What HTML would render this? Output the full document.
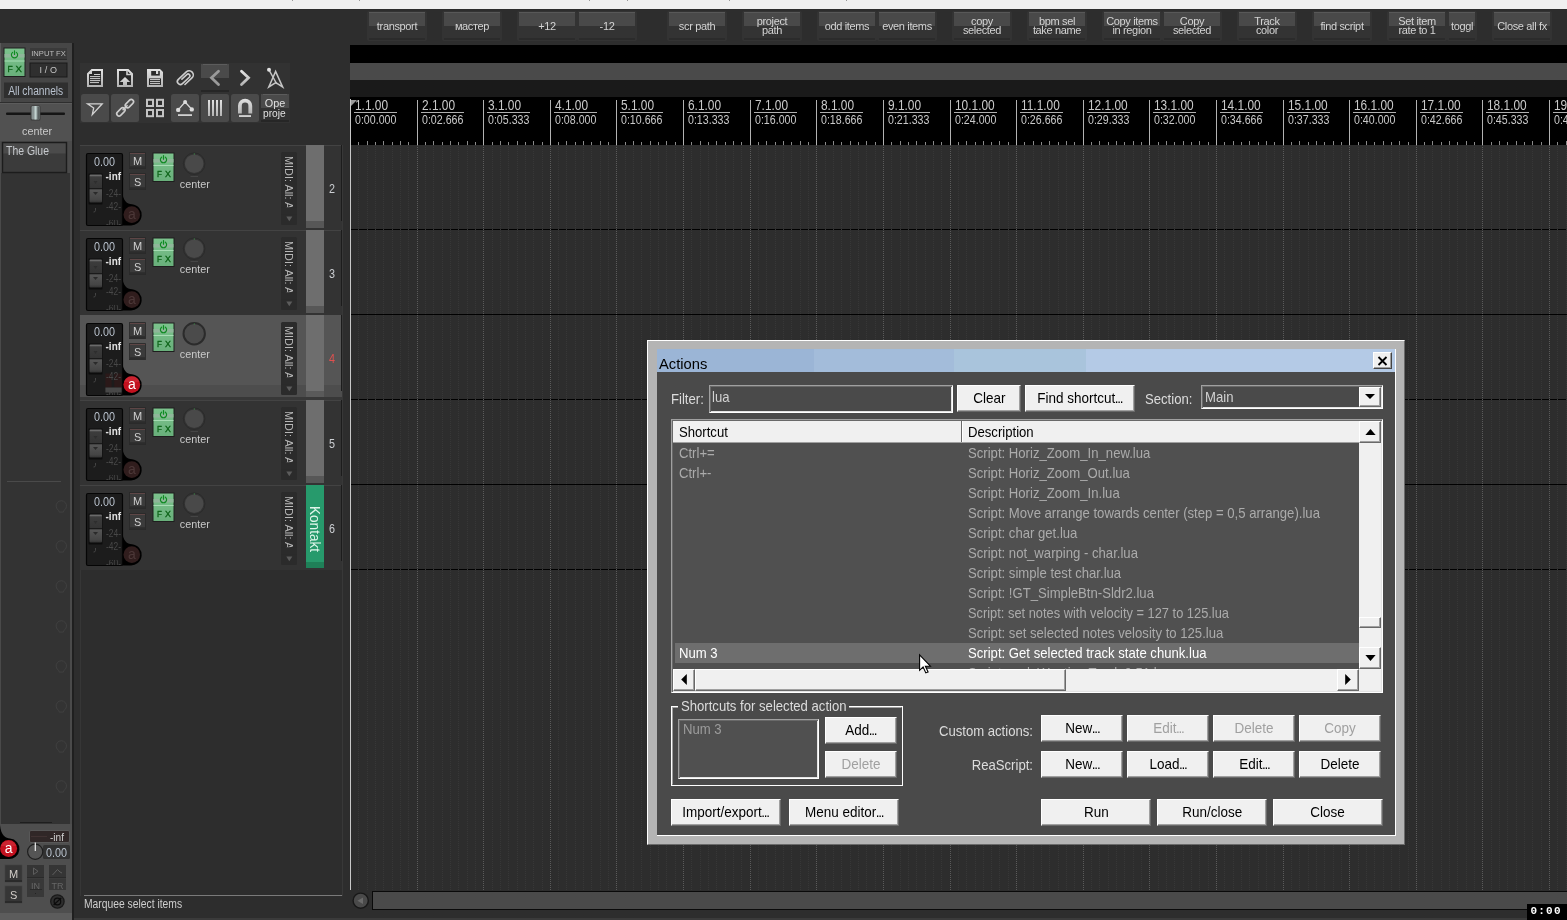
<!DOCTYPE html>
<html><head><meta charset="utf-8">
<style>
html,body{margin:0;padding:0;}
body{width:1567px;height:920px;overflow:hidden;background:#2d2d2d;position:relative;font-family:"Liberation Sans",sans-serif;font-size:12px;color:#cfcfcf;}
.a{position:absolute;}
svg{position:absolute;overflow:visible;}
#top{left:0;top:0;width:1567px;height:9px;background:#f0f0f0;}
/* top toolbar buttons */
.tb{position:absolute;top:11px;width:60px;height:30px;background:#333;border-radius:2px;box-sizing:border-box;}
.tb:before{content:"";position:absolute;left:2px;top:1px;right:2px;height:14px;background:#494949;border-top:1px solid #585858;box-sizing:border-box;}
.tb:after{content:"";position:absolute;left:2px;right:2px;bottom:1px;height:2px;background:#2b2b2b;}
.tb span{position:absolute;left:-4px;right:-4px;top:0;height:30px;display:flex;align-items:center;justify-content:center;text-align:center;color:#d4d4d4;font-size:11px;line-height:9px;letter-spacing:-0.35px;z-index:2;}
/* arrange */
#band1{left:350px;top:45px;width:1217px;height:18px;background:#000;}
#band2{left:350px;top:63px;width:1217px;height:17px;background:#4a4a4a;}
#band3{left:350px;top:80px;width:1217px;height:17px;background:#1a1a1a;}
#ruler{left:350px;top:97px;width:1217px;height:48px;background:#000;overflow:hidden;}
#arr{left:350px;top:145px;width:1217px;height:745px;background:#2d2d2d;overflow:hidden;}
.rl{color:#c9c9c9;white-space:nowrap;transform-origin:0 0;}
.r1{font-size:14px;line-height:16px;transform:scaleX(0.85);margin-left:-1px;}
.r2{font-size:12.5px;line-height:15px;transform:scaleX(0.85);margin-top:1px;}
.gm{top:0;width:1px;height:745px;background:repeating-linear-gradient(to bottom,#5a5a5a 0 1px,transparent 1px 2px);}
.gs{top:0;width:1px;height:745px;background:repeating-linear-gradient(to bottom,#373737 0 1px,transparent 1px 2px);}
</style></head><body>
<div id="wrap" class="a" style="left:0;top:0;width:1567px;height:920px;will-change:transform">
<div id="top" class="a"></div>
<div id="band1" class="a"></div><div id="band2" class="a"></div><div id="band3" class="a"></div>
<svg width="0" height="0" style="left:0;top:0"><defs>
<linearGradient id="fad" x1="0" y1="0" x2="0" y2="1"><stop offset="0" stop-color="#6a6a6a"/><stop offset="0.1" stop-color="#3c3c3c"/><stop offset="0.47" stop-color="#343434"/><stop offset="0.5" stop-color="#1a1a1a"/><stop offset="0.55" stop-color="#555"/><stop offset="0.9" stop-color="#454545"/><stop offset="1" stop-color="#333"/></linearGradient>
<linearGradient id="fxg" x1="0" y1="0" x2="0" y2="1"><stop offset="0" stop-color="#7cc38d"/><stop offset="1" stop-color="#69b07b"/></linearGradient>
</defs></svg>
<div class="tb" style="left:367px;width:60px"><span>transport</span></div>
<div class="tb" style="left:442px;width:60px"><span>мастер</span></div>
<div class="tb" style="left:517px;width:60px"><span>+12</span></div>
<div class="tb" style="left:577px;width:60px"><span>-12</span></div>
<div class="tb" style="left:667px;width:60px"><span>scr path</span></div>
<div class="tb" style="left:742px;width:60px"><span>project<br>path</span></div>
<div class="tb" style="left:817px;width:60px"><span>odd items</span></div>
<div class="tb" style="left:877px;width:60px"><span>even items</span></div>
<div class="tb" style="left:952px;width:60px"><span>copy<br>selected</span></div>
<div class="tb" style="left:1027px;width:60px"><span>bpm sel<br>take name</span></div>
<div class="tb" style="left:1102px;width:60px"><span>Copy items<br>in region</span></div>
<div class="tb" style="left:1162px;width:60px"><span>Copy<br>selected</span></div>
<div class="tb" style="left:1237px;width:60px"><span>Track<br>color</span></div>
<div class="tb" style="left:1312px;width:60px"><span>find script</span></div>
<div class="tb" style="left:1387px;width:60px"><span>Set item<br>rate to 1</span></div>
<div class="tb" style="left:1447px;width:30px"><span>toggl</span></div>
<div class="tb" style="left:1492px;width:60px"><span>Close all fx</span></div>
<div id="ruler" class="a">
<div class="a rl r1" style="left:6px;top:0px;">1.1.00</div>
<div class="a" style="left:4px;top:15px;width:43px;height:1px;background:#b0b0b0"></div>
<div class="a rl r2" style="left:5px;top:15px;">0:00.000</div>
<div class="a" style="left:8px;top:45px;width:1px;height:3px;background:#8a8a8a"></div>
<div class="a" style="left:17px;top:44px;width:1px;height:4px;background:#8a8a8a"></div>
<div class="a" style="left:25px;top:45px;width:1px;height:3px;background:#8a8a8a"></div>
<div class="a" style="left:33px;top:44px;width:1px;height:4px;background:#8a8a8a"></div>
<div class="a" style="left:42px;top:45px;width:1px;height:3px;background:#8a8a8a"></div>
<div class="a" style="left:50px;top:44px;width:1px;height:4px;background:#8a8a8a"></div>
<div class="a" style="left:58px;top:45px;width:1px;height:3px;background:#8a8a8a"></div>
<div class="a" style="left:67px;top:3px;width:1px;height:45px;background:#b2b2b2"></div>
<div class="a rl r1" style="left:73px;top:0px;">2.1.00</div>
<div class="a" style="left:71px;top:15px;width:43px;height:1px;background:#b0b0b0"></div>
<div class="a rl r2" style="left:72px;top:15px;">0:02.666</div>
<div class="a" style="left:75px;top:45px;width:1px;height:3px;background:#8a8a8a"></div>
<div class="a" style="left:83px;top:44px;width:1px;height:4px;background:#8a8a8a"></div>
<div class="a" style="left:92px;top:45px;width:1px;height:3px;background:#8a8a8a"></div>
<div class="a" style="left:100px;top:44px;width:1px;height:4px;background:#8a8a8a"></div>
<div class="a" style="left:108px;top:45px;width:1px;height:3px;background:#8a8a8a"></div>
<div class="a" style="left:117px;top:44px;width:1px;height:4px;background:#8a8a8a"></div>
<div class="a" style="left:125px;top:45px;width:1px;height:3px;background:#8a8a8a"></div>
<div class="a" style="left:133px;top:3px;width:1px;height:45px;background:#b2b2b2"></div>
<div class="a rl r1" style="left:139px;top:0px;">3.1.00</div>
<div class="a" style="left:137px;top:15px;width:43px;height:1px;background:#b0b0b0"></div>
<div class="a rl r2" style="left:138px;top:15px;">0:05.333</div>
<div class="a" style="left:142px;top:45px;width:1px;height:3px;background:#8a8a8a"></div>
<div class="a" style="left:150px;top:44px;width:1px;height:4px;background:#8a8a8a"></div>
<div class="a" style="left:158px;top:45px;width:1px;height:3px;background:#8a8a8a"></div>
<div class="a" style="left:167px;top:44px;width:1px;height:4px;background:#8a8a8a"></div>
<div class="a" style="left:175px;top:45px;width:1px;height:3px;background:#8a8a8a"></div>
<div class="a" style="left:183px;top:44px;width:1px;height:4px;background:#8a8a8a"></div>
<div class="a" style="left:192px;top:45px;width:1px;height:3px;background:#8a8a8a"></div>
<div class="a" style="left:200px;top:3px;width:1px;height:45px;background:#b2b2b2"></div>
<div class="a rl r1" style="left:206px;top:0px;">4.1.00</div>
<div class="a" style="left:204px;top:15px;width:43px;height:1px;background:#b0b0b0"></div>
<div class="a rl r2" style="left:205px;top:15px;">0:08.000</div>
<div class="a" style="left:208px;top:45px;width:1px;height:3px;background:#8a8a8a"></div>
<div class="a" style="left:216px;top:44px;width:1px;height:4px;background:#8a8a8a"></div>
<div class="a" style="left:225px;top:45px;width:1px;height:3px;background:#8a8a8a"></div>
<div class="a" style="left:233px;top:44px;width:1px;height:4px;background:#8a8a8a"></div>
<div class="a" style="left:241px;top:45px;width:1px;height:3px;background:#8a8a8a"></div>
<div class="a" style="left:250px;top:44px;width:1px;height:4px;background:#8a8a8a"></div>
<div class="a" style="left:258px;top:45px;width:1px;height:3px;background:#8a8a8a"></div>
<div class="a" style="left:266px;top:3px;width:1px;height:45px;background:#b2b2b2"></div>
<div class="a rl r1" style="left:272px;top:0px;">5.1.00</div>
<div class="a" style="left:270px;top:15px;width:43px;height:1px;background:#b0b0b0"></div>
<div class="a rl r2" style="left:271px;top:15px;">0:10.666</div>
<div class="a" style="left:275px;top:45px;width:1px;height:3px;background:#8a8a8a"></div>
<div class="a" style="left:283px;top:44px;width:1px;height:4px;background:#8a8a8a"></div>
<div class="a" style="left:291px;top:45px;width:1px;height:3px;background:#8a8a8a"></div>
<div class="a" style="left:300px;top:44px;width:1px;height:4px;background:#8a8a8a"></div>
<div class="a" style="left:308px;top:45px;width:1px;height:3px;background:#8a8a8a"></div>
<div class="a" style="left:316px;top:44px;width:1px;height:4px;background:#8a8a8a"></div>
<div class="a" style="left:325px;top:45px;width:1px;height:3px;background:#8a8a8a"></div>
<div class="a" style="left:333px;top:3px;width:1px;height:45px;background:#b2b2b2"></div>
<div class="a rl r1" style="left:339px;top:0px;">6.1.00</div>
<div class="a" style="left:337px;top:15px;width:43px;height:1px;background:#b0b0b0"></div>
<div class="a rl r2" style="left:338px;top:15px;">0:13.333</div>
<div class="a" style="left:341px;top:45px;width:1px;height:3px;background:#8a8a8a"></div>
<div class="a" style="left:350px;top:44px;width:1px;height:4px;background:#8a8a8a"></div>
<div class="a" style="left:358px;top:45px;width:1px;height:3px;background:#8a8a8a"></div>
<div class="a" style="left:366px;top:44px;width:1px;height:4px;background:#8a8a8a"></div>
<div class="a" style="left:375px;top:45px;width:1px;height:3px;background:#8a8a8a"></div>
<div class="a" style="left:383px;top:44px;width:1px;height:4px;background:#8a8a8a"></div>
<div class="a" style="left:391px;top:45px;width:1px;height:3px;background:#8a8a8a"></div>
<div class="a" style="left:400px;top:3px;width:1px;height:45px;background:#b2b2b2"></div>
<div class="a rl r1" style="left:406px;top:0px;">7.1.00</div>
<div class="a" style="left:404px;top:15px;width:43px;height:1px;background:#b0b0b0"></div>
<div class="a rl r2" style="left:405px;top:15px;">0:16.000</div>
<div class="a" style="left:408px;top:45px;width:1px;height:3px;background:#8a8a8a"></div>
<div class="a" style="left:416px;top:44px;width:1px;height:4px;background:#8a8a8a"></div>
<div class="a" style="left:425px;top:45px;width:1px;height:3px;background:#8a8a8a"></div>
<div class="a" style="left:433px;top:44px;width:1px;height:4px;background:#8a8a8a"></div>
<div class="a" style="left:441px;top:45px;width:1px;height:3px;background:#8a8a8a"></div>
<div class="a" style="left:450px;top:44px;width:1px;height:4px;background:#8a8a8a"></div>
<div class="a" style="left:458px;top:45px;width:1px;height:3px;background:#8a8a8a"></div>
<div class="a" style="left:466px;top:3px;width:1px;height:45px;background:#b2b2b2"></div>
<div class="a rl r1" style="left:472px;top:0px;">8.1.00</div>
<div class="a" style="left:470px;top:15px;width:43px;height:1px;background:#b0b0b0"></div>
<div class="a rl r2" style="left:471px;top:15px;">0:18.666</div>
<div class="a" style="left:475px;top:45px;width:1px;height:3px;background:#8a8a8a"></div>
<div class="a" style="left:483px;top:44px;width:1px;height:4px;background:#8a8a8a"></div>
<div class="a" style="left:491px;top:45px;width:1px;height:3px;background:#8a8a8a"></div>
<div class="a" style="left:500px;top:44px;width:1px;height:4px;background:#8a8a8a"></div>
<div class="a" style="left:508px;top:45px;width:1px;height:3px;background:#8a8a8a"></div>
<div class="a" style="left:516px;top:44px;width:1px;height:4px;background:#8a8a8a"></div>
<div class="a" style="left:525px;top:45px;width:1px;height:3px;background:#8a8a8a"></div>
<div class="a" style="left:533px;top:3px;width:1px;height:45px;background:#b2b2b2"></div>
<div class="a rl r1" style="left:539px;top:0px;">9.1.00</div>
<div class="a" style="left:537px;top:15px;width:43px;height:1px;background:#b0b0b0"></div>
<div class="a rl r2" style="left:538px;top:15px;">0:21.333</div>
<div class="a" style="left:541px;top:45px;width:1px;height:3px;background:#8a8a8a"></div>
<div class="a" style="left:550px;top:44px;width:1px;height:4px;background:#8a8a8a"></div>
<div class="a" style="left:558px;top:45px;width:1px;height:3px;background:#8a8a8a"></div>
<div class="a" style="left:566px;top:44px;width:1px;height:4px;background:#8a8a8a"></div>
<div class="a" style="left:575px;top:45px;width:1px;height:3px;background:#8a8a8a"></div>
<div class="a" style="left:583px;top:44px;width:1px;height:4px;background:#8a8a8a"></div>
<div class="a" style="left:591px;top:45px;width:1px;height:3px;background:#8a8a8a"></div>
<div class="a" style="left:600px;top:3px;width:1px;height:45px;background:#b2b2b2"></div>
<div class="a rl r1" style="left:606px;top:0px;">10.1.00</div>
<div class="a" style="left:604px;top:15px;width:43px;height:1px;background:#b0b0b0"></div>
<div class="a rl r2" style="left:605px;top:15px;">0:24.000</div>
<div class="a" style="left:608px;top:45px;width:1px;height:3px;background:#8a8a8a"></div>
<div class="a" style="left:616px;top:44px;width:1px;height:4px;background:#8a8a8a"></div>
<div class="a" style="left:625px;top:45px;width:1px;height:3px;background:#8a8a8a"></div>
<div class="a" style="left:633px;top:44px;width:1px;height:4px;background:#8a8a8a"></div>
<div class="a" style="left:641px;top:45px;width:1px;height:3px;background:#8a8a8a"></div>
<div class="a" style="left:649px;top:44px;width:1px;height:4px;background:#8a8a8a"></div>
<div class="a" style="left:658px;top:45px;width:1px;height:3px;background:#8a8a8a"></div>
<div class="a" style="left:666px;top:3px;width:1px;height:45px;background:#b2b2b2"></div>
<div class="a rl r1" style="left:672px;top:0px;">11.1.00</div>
<div class="a" style="left:670px;top:15px;width:43px;height:1px;background:#b0b0b0"></div>
<div class="a rl r2" style="left:671px;top:15px;">0:26.666</div>
<div class="a" style="left:674px;top:45px;width:1px;height:3px;background:#8a8a8a"></div>
<div class="a" style="left:683px;top:44px;width:1px;height:4px;background:#8a8a8a"></div>
<div class="a" style="left:691px;top:45px;width:1px;height:3px;background:#8a8a8a"></div>
<div class="a" style="left:699px;top:44px;width:1px;height:4px;background:#8a8a8a"></div>
<div class="a" style="left:708px;top:45px;width:1px;height:3px;background:#8a8a8a"></div>
<div class="a" style="left:716px;top:44px;width:1px;height:4px;background:#8a8a8a"></div>
<div class="a" style="left:724px;top:45px;width:1px;height:3px;background:#8a8a8a"></div>
<div class="a" style="left:733px;top:3px;width:1px;height:45px;background:#b2b2b2"></div>
<div class="a rl r1" style="left:739px;top:0px;">12.1.00</div>
<div class="a" style="left:737px;top:15px;width:43px;height:1px;background:#b0b0b0"></div>
<div class="a rl r2" style="left:738px;top:15px;">0:29.333</div>
<div class="a" style="left:741px;top:45px;width:1px;height:3px;background:#8a8a8a"></div>
<div class="a" style="left:749px;top:44px;width:1px;height:4px;background:#8a8a8a"></div>
<div class="a" style="left:758px;top:45px;width:1px;height:3px;background:#8a8a8a"></div>
<div class="a" style="left:766px;top:44px;width:1px;height:4px;background:#8a8a8a"></div>
<div class="a" style="left:774px;top:45px;width:1px;height:3px;background:#8a8a8a"></div>
<div class="a" style="left:783px;top:44px;width:1px;height:4px;background:#8a8a8a"></div>
<div class="a" style="left:791px;top:45px;width:1px;height:3px;background:#8a8a8a"></div>
<div class="a" style="left:799px;top:3px;width:1px;height:45px;background:#b2b2b2"></div>
<div class="a rl r1" style="left:805px;top:0px;">13.1.00</div>
<div class="a" style="left:803px;top:15px;width:43px;height:1px;background:#b0b0b0"></div>
<div class="a rl r2" style="left:804px;top:15px;">0:32.000</div>
<div class="a" style="left:808px;top:45px;width:1px;height:3px;background:#8a8a8a"></div>
<div class="a" style="left:816px;top:44px;width:1px;height:4px;background:#8a8a8a"></div>
<div class="a" style="left:824px;top:45px;width:1px;height:3px;background:#8a8a8a"></div>
<div class="a" style="left:833px;top:44px;width:1px;height:4px;background:#8a8a8a"></div>
<div class="a" style="left:841px;top:45px;width:1px;height:3px;background:#8a8a8a"></div>
<div class="a" style="left:849px;top:44px;width:1px;height:4px;background:#8a8a8a"></div>
<div class="a" style="left:858px;top:45px;width:1px;height:3px;background:#8a8a8a"></div>
<div class="a" style="left:866px;top:3px;width:1px;height:45px;background:#b2b2b2"></div>
<div class="a rl r1" style="left:872px;top:0px;">14.1.00</div>
<div class="a" style="left:870px;top:15px;width:43px;height:1px;background:#b0b0b0"></div>
<div class="a rl r2" style="left:871px;top:15px;">0:34.666</div>
<div class="a" style="left:874px;top:45px;width:1px;height:3px;background:#8a8a8a"></div>
<div class="a" style="left:883px;top:44px;width:1px;height:4px;background:#8a8a8a"></div>
<div class="a" style="left:891px;top:45px;width:1px;height:3px;background:#8a8a8a"></div>
<div class="a" style="left:899px;top:44px;width:1px;height:4px;background:#8a8a8a"></div>
<div class="a" style="left:908px;top:45px;width:1px;height:3px;background:#8a8a8a"></div>
<div class="a" style="left:916px;top:44px;width:1px;height:4px;background:#8a8a8a"></div>
<div class="a" style="left:924px;top:45px;width:1px;height:3px;background:#8a8a8a"></div>
<div class="a" style="left:933px;top:3px;width:1px;height:45px;background:#b2b2b2"></div>
<div class="a rl r1" style="left:939px;top:0px;">15.1.00</div>
<div class="a" style="left:937px;top:15px;width:43px;height:1px;background:#b0b0b0"></div>
<div class="a rl r2" style="left:938px;top:15px;">0:37.333</div>
<div class="a" style="left:941px;top:45px;width:1px;height:3px;background:#8a8a8a"></div>
<div class="a" style="left:949px;top:44px;width:1px;height:4px;background:#8a8a8a"></div>
<div class="a" style="left:958px;top:45px;width:1px;height:3px;background:#8a8a8a"></div>
<div class="a" style="left:966px;top:44px;width:1px;height:4px;background:#8a8a8a"></div>
<div class="a" style="left:974px;top:45px;width:1px;height:3px;background:#8a8a8a"></div>
<div class="a" style="left:983px;top:44px;width:1px;height:4px;background:#8a8a8a"></div>
<div class="a" style="left:991px;top:45px;width:1px;height:3px;background:#8a8a8a"></div>
<div class="a" style="left:999px;top:3px;width:1px;height:45px;background:#b2b2b2"></div>
<div class="a rl r1" style="left:1005px;top:0px;">16.1.00</div>
<div class="a" style="left:1003px;top:15px;width:43px;height:1px;background:#b0b0b0"></div>
<div class="a rl r2" style="left:1004px;top:15px;">0:40.000</div>
<div class="a" style="left:1008px;top:45px;width:1px;height:3px;background:#8a8a8a"></div>
<div class="a" style="left:1016px;top:44px;width:1px;height:4px;background:#8a8a8a"></div>
<div class="a" style="left:1024px;top:45px;width:1px;height:3px;background:#8a8a8a"></div>
<div class="a" style="left:1033px;top:44px;width:1px;height:4px;background:#8a8a8a"></div>
<div class="a" style="left:1041px;top:45px;width:1px;height:3px;background:#8a8a8a"></div>
<div class="a" style="left:1049px;top:44px;width:1px;height:4px;background:#8a8a8a"></div>
<div class="a" style="left:1058px;top:45px;width:1px;height:3px;background:#8a8a8a"></div>
<div class="a" style="left:1066px;top:3px;width:1px;height:45px;background:#b2b2b2"></div>
<div class="a rl r1" style="left:1072px;top:0px;">17.1.00</div>
<div class="a" style="left:1070px;top:15px;width:43px;height:1px;background:#b0b0b0"></div>
<div class="a rl r2" style="left:1071px;top:15px;">0:42.666</div>
<div class="a" style="left:1074px;top:45px;width:1px;height:3px;background:#8a8a8a"></div>
<div class="a" style="left:1082px;top:44px;width:1px;height:4px;background:#8a8a8a"></div>
<div class="a" style="left:1091px;top:45px;width:1px;height:3px;background:#8a8a8a"></div>
<div class="a" style="left:1099px;top:44px;width:1px;height:4px;background:#8a8a8a"></div>
<div class="a" style="left:1107px;top:45px;width:1px;height:3px;background:#8a8a8a"></div>
<div class="a" style="left:1116px;top:44px;width:1px;height:4px;background:#8a8a8a"></div>
<div class="a" style="left:1124px;top:45px;width:1px;height:3px;background:#8a8a8a"></div>
<div class="a" style="left:1132px;top:3px;width:1px;height:45px;background:#b2b2b2"></div>
<div class="a rl r1" style="left:1138px;top:0px;">18.1.00</div>
<div class="a" style="left:1136px;top:15px;width:43px;height:1px;background:#b0b0b0"></div>
<div class="a rl r2" style="left:1137px;top:15px;">0:45.333</div>
<div class="a" style="left:1141px;top:45px;width:1px;height:3px;background:#8a8a8a"></div>
<div class="a" style="left:1149px;top:44px;width:1px;height:4px;background:#8a8a8a"></div>
<div class="a" style="left:1157px;top:45px;width:1px;height:3px;background:#8a8a8a"></div>
<div class="a" style="left:1166px;top:44px;width:1px;height:4px;background:#8a8a8a"></div>
<div class="a" style="left:1174px;top:45px;width:1px;height:3px;background:#8a8a8a"></div>
<div class="a" style="left:1182px;top:44px;width:1px;height:4px;background:#8a8a8a"></div>
<div class="a" style="left:1191px;top:45px;width:1px;height:3px;background:#8a8a8a"></div>
<div class="a" style="left:1199px;top:3px;width:1px;height:45px;background:#b2b2b2"></div>
<div class="a rl r1" style="left:1205px;top:0px;">19.1.00</div>
<div class="a" style="left:1203px;top:15px;width:43px;height:1px;background:#b0b0b0"></div>
<div class="a rl r2" style="left:1204px;top:15px;">0:48.000</div>
<div class="a" style="left:1207px;top:45px;width:1px;height:3px;background:#8a8a8a"></div>
<div class="a" style="left:1216px;top:44px;width:1px;height:4px;background:#8a8a8a"></div>
<div class="a" style="left:1224px;top:45px;width:1px;height:3px;background:#8a8a8a"></div>
<div class="a" style="left:1232px;top:44px;width:1px;height:4px;background:#8a8a8a"></div>
<div class="a" style="left:1241px;top:45px;width:1px;height:3px;background:#8a8a8a"></div>
<div class="a" style="left:1249px;top:44px;width:1px;height:4px;background:#8a8a8a"></div>
<div class="a" style="left:1257px;top:45px;width:1px;height:3px;background:#8a8a8a"></div>
<div class="a" style="left:0;top:3px;width:0;height:0;border-top:7px solid #9a9a9a;border-right:7px solid transparent"></div></div>
<div id="arr" class="a">
<div class="a" style="left:0;top:84px;width:1217px;height:1px;background:#000"></div>
<div class="a" style="left:0;top:169px;width:1217px;height:1px;background:#000"></div>
<div class="a" style="left:0;top:254px;width:1217px;height:1px;background:#000"></div>
<div class="a" style="left:0;top:339px;width:1217px;height:1px;background:#000"></div>
<div class="a" style="left:0;top:424px;width:1217px;height:1px;background:#000"></div>
<div class="a gs" style="left:8px"></div>
<div class="a gs" style="left:17px"></div>
<div class="a gs" style="left:25px"></div>
<div class="a gs" style="left:33px"></div>
<div class="a gs" style="left:42px"></div>
<div class="a gs" style="left:50px"></div>
<div class="a gs" style="left:58px"></div>
<div class="a gm" style="left:67px"></div>
<div class="a gs" style="left:75px"></div>
<div class="a gs" style="left:83px"></div>
<div class="a gs" style="left:92px"></div>
<div class="a gs" style="left:100px"></div>
<div class="a gs" style="left:108px"></div>
<div class="a gs" style="left:117px"></div>
<div class="a gs" style="left:125px"></div>
<div class="a gm" style="left:133px"></div>
<div class="a gs" style="left:142px"></div>
<div class="a gs" style="left:150px"></div>
<div class="a gs" style="left:158px"></div>
<div class="a gs" style="left:167px"></div>
<div class="a gs" style="left:175px"></div>
<div class="a gs" style="left:183px"></div>
<div class="a gs" style="left:192px"></div>
<div class="a gm" style="left:200px"></div>
<div class="a gs" style="left:208px"></div>
<div class="a gs" style="left:216px"></div>
<div class="a gs" style="left:225px"></div>
<div class="a gs" style="left:233px"></div>
<div class="a gs" style="left:241px"></div>
<div class="a gs" style="left:250px"></div>
<div class="a gs" style="left:258px"></div>
<div class="a gm" style="left:266px"></div>
<div class="a gs" style="left:275px"></div>
<div class="a gs" style="left:283px"></div>
<div class="a gs" style="left:291px"></div>
<div class="a gs" style="left:300px"></div>
<div class="a gs" style="left:308px"></div>
<div class="a gs" style="left:316px"></div>
<div class="a gs" style="left:325px"></div>
<div class="a gm" style="left:333px"></div>
<div class="a gs" style="left:341px"></div>
<div class="a gs" style="left:350px"></div>
<div class="a gs" style="left:358px"></div>
<div class="a gs" style="left:366px"></div>
<div class="a gs" style="left:375px"></div>
<div class="a gs" style="left:383px"></div>
<div class="a gs" style="left:391px"></div>
<div class="a gm" style="left:400px"></div>
<div class="a gs" style="left:408px"></div>
<div class="a gs" style="left:416px"></div>
<div class="a gs" style="left:425px"></div>
<div class="a gs" style="left:433px"></div>
<div class="a gs" style="left:441px"></div>
<div class="a gs" style="left:450px"></div>
<div class="a gs" style="left:458px"></div>
<div class="a gm" style="left:466px"></div>
<div class="a gs" style="left:475px"></div>
<div class="a gs" style="left:483px"></div>
<div class="a gs" style="left:491px"></div>
<div class="a gs" style="left:500px"></div>
<div class="a gs" style="left:508px"></div>
<div class="a gs" style="left:516px"></div>
<div class="a gs" style="left:525px"></div>
<div class="a gm" style="left:533px"></div>
<div class="a gs" style="left:541px"></div>
<div class="a gs" style="left:550px"></div>
<div class="a gs" style="left:558px"></div>
<div class="a gs" style="left:566px"></div>
<div class="a gs" style="left:575px"></div>
<div class="a gs" style="left:583px"></div>
<div class="a gs" style="left:591px"></div>
<div class="a gm" style="left:600px"></div>
<div class="a gs" style="left:608px"></div>
<div class="a gs" style="left:616px"></div>
<div class="a gs" style="left:625px"></div>
<div class="a gs" style="left:633px"></div>
<div class="a gs" style="left:641px"></div>
<div class="a gs" style="left:649px"></div>
<div class="a gs" style="left:658px"></div>
<div class="a gm" style="left:666px"></div>
<div class="a gs" style="left:674px"></div>
<div class="a gs" style="left:683px"></div>
<div class="a gs" style="left:691px"></div>
<div class="a gs" style="left:699px"></div>
<div class="a gs" style="left:708px"></div>
<div class="a gs" style="left:716px"></div>
<div class="a gs" style="left:724px"></div>
<div class="a gm" style="left:733px"></div>
<div class="a gs" style="left:741px"></div>
<div class="a gs" style="left:749px"></div>
<div class="a gs" style="left:758px"></div>
<div class="a gs" style="left:766px"></div>
<div class="a gs" style="left:774px"></div>
<div class="a gs" style="left:783px"></div>
<div class="a gs" style="left:791px"></div>
<div class="a gm" style="left:799px"></div>
<div class="a gs" style="left:808px"></div>
<div class="a gs" style="left:816px"></div>
<div class="a gs" style="left:824px"></div>
<div class="a gs" style="left:833px"></div>
<div class="a gs" style="left:841px"></div>
<div class="a gs" style="left:849px"></div>
<div class="a gs" style="left:858px"></div>
<div class="a gm" style="left:866px"></div>
<div class="a gs" style="left:874px"></div>
<div class="a gs" style="left:883px"></div>
<div class="a gs" style="left:891px"></div>
<div class="a gs" style="left:899px"></div>
<div class="a gs" style="left:908px"></div>
<div class="a gs" style="left:916px"></div>
<div class="a gs" style="left:924px"></div>
<div class="a gm" style="left:933px"></div>
<div class="a gs" style="left:941px"></div>
<div class="a gs" style="left:949px"></div>
<div class="a gs" style="left:958px"></div>
<div class="a gs" style="left:966px"></div>
<div class="a gs" style="left:974px"></div>
<div class="a gs" style="left:983px"></div>
<div class="a gs" style="left:991px"></div>
<div class="a gm" style="left:999px"></div>
<div class="a gs" style="left:1008px"></div>
<div class="a gs" style="left:1016px"></div>
<div class="a gs" style="left:1024px"></div>
<div class="a gs" style="left:1033px"></div>
<div class="a gs" style="left:1041px"></div>
<div class="a gs" style="left:1049px"></div>
<div class="a gs" style="left:1058px"></div>
<div class="a gm" style="left:1066px"></div>
<div class="a gs" style="left:1074px"></div>
<div class="a gs" style="left:1082px"></div>
<div class="a gs" style="left:1091px"></div>
<div class="a gs" style="left:1099px"></div>
<div class="a gs" style="left:1107px"></div>
<div class="a gs" style="left:1116px"></div>
<div class="a gs" style="left:1124px"></div>
<div class="a gm" style="left:1132px"></div>
<div class="a gs" style="left:1141px"></div>
<div class="a gs" style="left:1149px"></div>
<div class="a gs" style="left:1157px"></div>
<div class="a gs" style="left:1166px"></div>
<div class="a gs" style="left:1174px"></div>
<div class="a gs" style="left:1182px"></div>
<div class="a gs" style="left:1191px"></div>
<div class="a gm" style="left:1199px"></div>
<div class="a gs" style="left:1207px"></div>
<div class="a gs" style="left:1216px"></div>
<div class="a gs" style="left:1224px"></div>
<div class="a gs" style="left:1232px"></div>
<div class="a gs" style="left:1241px"></div>
<div class="a gs" style="left:1249px"></div>
<div class="a gs" style="left:1257px"></div>
</div>
<div class="a" style="left:350px;top:99px;width:1px;height:791px;background:#c8c8c8"></div>
<div class="a" style="left:292px;top:0;width:1px;height:1px;background:#9a9a9a"></div>
<div class="a" style="left:359px;top:0;width:1px;height:1px;background:#9a9a9a"></div>
<div class="a" style="left:589px;top:0;width:1px;height:1px;background:#9a9a9a"></div>
<div class="a" style="left:627px;top:0;width:1px;height:1px;background:#9a9a9a"></div>
<div class="a" style="left:729px;top:0;width:1px;height:1px;background:#9a9a9a"></div>
<div class="a" style="left:846px;top:0;width:1px;height:1px;background:#9a9a9a"></div>
<svg width="80" height="877" style="left:0;top:43px" viewBox="0 43 80 877">
<rect x="0" y="43" width="72" height="60" fill="#464646"/>
<rect x="0" y="43" width="1" height="60" fill="#5a5a5a"/>
<rect x="0" y="102" width="72" height="1" fill="#2e2e2e"/>
<rect x="0" y="103" width="72" height="38" fill="#515151"/>
<rect x="0" y="103" width="72" height="1" fill="#5c5c5c"/>
<rect x="0" y="141" width="72" height="683" fill="#4a4a4a"/>
<rect x="1" y="173" width="69" height="651" fill="#333333"/>
<rect x="0" y="824" width="72" height="90" fill="#4e4e4e"/>
<rect x="0" y="913" width="72" height="7" fill="#5c5c5c"/>
<rect x="72" y="43" width="2" height="877" fill="#1f1f1f"/>
<rect x="3.5" y="47.5" width="22" height="29.5" fill="#1e1e1e"/>
<rect x="4.5" y="48.5" width="20" height="27.5" fill="url(#fxg)"/>
<rect x="4.5" y="54" width="20" height="3.5" fill="#8fb79a"/>
<rect x="4.5" y="60.5" width="20" height="1" fill="#a6dcb3"/>
<path d="M12.6,52.4 a3.1,3.1 0 1 0 3.8,0 M14.5,50.8 v3.6" stroke="#0f8a22" stroke-width="1.2" fill="none" stroke-linecap="round"/>
<g font-size="9.8" fill="#0b6216" stroke="#0b6216" stroke-width="0.35"><text x="7.6" y="72" textLength="5.2" lengthAdjust="spacingAndGlyphs">F</text><text x="15.4" y="72" textLength="6.4" lengthAdjust="spacingAndGlyphs">X</text></g>
<rect x="30" y="48" width="37" height="12" fill="#3a3a3a"/>
<rect x="30" y="59" width="37" height="1" fill="#2c2c2c"/>
<text x="48.5" y="56.2" font-size="7.5" fill="#bdbdbd" text-anchor="middle" textLength="34.5" lengthAdjust="spacingAndGlyphs">INPUT FX</text>
<rect x="30" y="63" width="37" height="14" fill="#2f2f2f" stroke="#1a1a1a" stroke-width="1"/>
<text x="48.2" y="73.2" font-size="9" fill="#c4c4c4" text-anchor="middle" textLength="17.5" lengthAdjust="spacing">I / O</text>
<rect x="4" y="82.5" width="64" height="15.5" fill="#2f2f2f"/>
<text x="35.7" y="95.1" font-size="12" fill="#b9c2cf" text-anchor="middle" textLength="55" lengthAdjust="spacingAndGlyphs">All channels</text>
<rect x="6" y="112.5" width="59" height="2.5" rx="1" fill="#151515"/>
<rect x="30.5" y="105.5" width="10" height="15" rx="1.5" fill="#3a3a3a"/>
<rect x="31.5" y="106" width="8" height="13.5" rx="1" fill="#8a9494"/>
<rect x="34.5" y="106" width="2" height="13.5" fill="#c2d2d0"/>
<rect x="37.5" y="106.5" width="2" height="13" fill="#596060"/>
<text x="37" y="135" font-size="11.5" fill="#c9c9c9" text-anchor="middle" textLength="30" lengthAdjust="spacingAndGlyphs">center</text>
<rect x="2.5" y="142.5" width="64" height="30" fill="#3b3b3b" stroke="#1c1c1c" stroke-width="1.4"/>
<rect x="3.5" y="143.5" width="62" height="10" fill="#4b4b4b"/>
<text x="6" y="155" font-size="12" fill="#c6c9cd" textLength="43" lengthAdjust="spacingAndGlyphs">The Glue</text>
<rect x="7" y="481" width="54" height="1" fill="#4a4a4a"/>
<path d="M58.8,510.5 a5.2,5.2 0 1 1 5,0 l-0.4,1.6 h-4.2z" fill="none" stroke="#404040" stroke-width="1"/>
<path d="M58.8,550.5 a5.2,5.2 0 1 1 5,0 l-0.4,1.6 h-4.2z" fill="none" stroke="#404040" stroke-width="1"/>
<path d="M58.8,590.5 a5.2,5.2 0 1 1 5,0 l-0.4,1.6 h-4.2z" fill="none" stroke="#404040" stroke-width="1"/>
<path d="M58.8,630.5 a5.2,5.2 0 1 1 5,0 l-0.4,1.6 h-4.2z" fill="none" stroke="#404040" stroke-width="1"/>
<path d="M58.8,670.5 a5.2,5.2 0 1 1 5,0 l-0.4,1.6 h-4.2z" fill="none" stroke="#404040" stroke-width="1"/>
<path d="M58.8,710.5 a5.2,5.2 0 1 1 5,0 l-0.4,1.6 h-4.2z" fill="none" stroke="#404040" stroke-width="1"/>
<path d="M58.8,750.5 a5.2,5.2 0 1 1 5,0 l-0.4,1.6 h-4.2z" fill="none" stroke="#404040" stroke-width="1"/>
<path d="M58.8,790.5 a5.2,5.2 0 1 1 5,0 l-0.4,1.6 h-4.2z" fill="none" stroke="#404040" stroke-width="1"/>
<rect x="20" y="822" width="32" height="1" fill="#1e1e1e"/>
<path d="M0,825 C1,836 6,838 10,838.5 A10.3,10.3 0 1 1 8,859 L0,859 Z" fill="#000"/>
<circle cx="8.6" cy="848.6" r="8.5" fill="#c3111f"/><path d="M0.8,846 a8.4,8.4 0 0 1 15.6,0z" fill="#d43542" opacity="0.5"/>
<text x="8.6" y="852.8" font-size="14" fill="#fff" text-anchor="middle">a</text>
<rect x="29.5" y="830.5" width="40" height="12" rx="1.5" fill="#302727" stroke="#585858" stroke-width="1"/>
<rect x="31" y="836" width="16" height="1" fill="#403232"/>
<text x="64" y="840.5" font-size="10.5" fill="#d0d0d0" text-anchor="end" textLength="14" lengthAdjust="spacingAndGlyphs">-inf</text>
<rect x="43" y="845" width="27" height="14" rx="1.5" fill="#323232"/>
<text x="56.5" y="856.8" font-size="13" fill="#b9c2cd" text-anchor="middle" textLength="21" lengthAdjust="spacingAndGlyphs">0.00</text>
<circle cx="35.2" cy="851.7" r="7.6" fill="#555" stroke="#1e1e1e" stroke-width="1.2"/>
<rect x="34.7" y="842.5" width="1.2" height="8.5" fill="#f0f0f0"/>
<rect x="5" y="865" width="17" height="17" fill="#363636" stroke="#444" stroke-width="0.6"/>
<rect x="5" y="880" width="17" height="2" fill="#2a2a2a"/>
<text x="13.6" y="877.5" font-size="11" fill="#d2cdc8" text-anchor="middle">M</text>
<rect x="5" y="886" width="17" height="17" fill="#363636" stroke="#444" stroke-width="0.6"/>
<rect x="5" y="901" width="17" height="2" fill="#2a2a2a"/>
<text x="13.6" y="898.5" font-size="11" fill="#d2cdc8" text-anchor="middle">S</text>
<rect x="27" y="865" width="17" height="13" fill="#353535"/><rect x="27" y="877" width="17" height="1.5" fill="#2a2a2a"/>
<path d="M33.5,868 v6.5 l4.5,-3.2z" fill="none" stroke="#5e5e5e" stroke-width="1"/>
<rect x="27" y="879" width="17" height="18" fill="#383838"/>
<text x="35.5" y="888.5" font-size="9" fill="#666" text-anchor="middle">IN</text>
<rect x="30" y="889" width="12" height="1" fill="#2a2a2a"/><rect x="35" y="893" width="1" height="1" fill="#222"/>
<rect x="49" y="865" width="17" height="13" fill="#353535"/><rect x="49" y="877" width="17" height="1.5" fill="#2a2a2a"/>
<path d="M52.5,875 l5,-5.5 l2.5,2.5 l2,1" fill="none" stroke="#5e5e5e" stroke-width="1"/>
<rect x="49" y="879" width="17" height="11" fill="#383838"/>
<text x="57.5" y="888.5" font-size="9" fill="#666" text-anchor="middle">TR</text>
<circle cx="57.4" cy="901.5" r="6.7" fill="#2e2e2e" stroke="#1a1a1a" stroke-width="1.3"/>
<circle cx="57.4" cy="901.5" r="3.3" fill="none" stroke="#0c0c0c" stroke-width="1.2"/><path d="M53.6,905 l7.6,-7" stroke="#0c0c0c" stroke-width="1.2"/>
</svg>
<svg width="210" height="60" style="left:80px;top:63px" viewBox="80 63 210 60">
<defs><linearGradient id="ig" x1="0" y1="0" x2="0" y2="1"><stop offset="0" stop-color="#e2e2e2"/><stop offset="1" stop-color="#b4b4b4"/></linearGradient></defs>
<rect x="80" y="63" width="210" height="60" fill="#323232"/>
<rect x="81" y="94" width="28" height="28" rx="2.5" fill="#4a4a4a"/>
<rect x="111" y="94" width="28" height="28" rx="2.5" fill="#4a4a4a"/>
<rect x="171" y="94" width="28" height="28" rx="2.5" fill="#4a4a4a"/>
<rect x="201" y="94" width="28" height="28" rx="2.5" fill="#4a4a4a"/>
<rect x="231" y="94" width="28" height="28" rx="2.5" fill="#4a4a4a"/>
<rect x="201" y="64" width="28" height="14" fill="#4a4a4a"/><rect x="203" y="64" width="24" height="1" fill="#5c5c5c"/><rect x="201" y="90" width="28" height="2" fill="#262626"/>
<rect x="261" y="94" width="28" height="14" fill="#4a4a4a"/><rect x="263" y="94" width="24" height="1" fill="#5c5c5c"/><rect x="261" y="120" width="28" height="2" fill="#262626"/>
<path d="M92,70 H102 V86 H88 V74 Z" fill="#2a2a2a" stroke="url(#ig)" stroke-width="2" stroke-linejoin="miter"/>
<path d="M88,74 L92,70 V74 Z" fill="#cfcfcf"/>
<path d="M94,74.5 h6.2 M90,76.6 h10.2 M90,78.6 h10.2 M90,80.6 h10.2 M90,82.6 h9" stroke="#cfcfcf" stroke-width="1"/>
<path d="M118,70 H128 L132,74 V86 H118 Z" fill="#2a2a2a" stroke="url(#ig)" stroke-width="2"/>
<path d="M127,70 V74.5 H132" fill="none" stroke="#d0d0d0" stroke-width="1.6"/>
<path d="M125,77 L130.2,82 H127 V86 H123 V82 H119.8 Z" fill="url(#ig)"/>
<path d="M147,69 H160 L163,72 V87 H147 Z" fill="url(#ig)"/>
<rect x="151.2" y="71" width="8.6" height="4.6" fill="#2a2a2a"/><rect x="156" y="71" width="2.2" height="3" fill="#d8d8d8"/>
<rect x="149" y="78.4" width="12" height="6.6" fill="#2a2a2a"/><path d="M150,79.6 h10 M150,81.6 h10 M150,83.6 h10" stroke="#cfcfcf" stroke-width="1"/>
<g transform="translate(185.5,78.3) rotate(-43) scale(0.92)" fill="none" stroke="#cdcdcd" stroke-width="1.75" stroke-linecap="round"><path d="M-5,4.5 H5.4 A4.5,4.5 0 0 0 5.4,-4.5 H-6.4 A3.25,3.25 0 0 0 -6.4,2 H3.8 A2,2 0 0 0 3.8,-2 H-3.5"/></g>
<path d="M218.5,71.3 L211.5,77.8 L218.5,84.6" fill="none" stroke="#9a9a9a" stroke-width="2.8" stroke-linecap="round" stroke-linejoin="miter"/>
<path d="M241.5,71.3 L248.5,77.8 L241.5,84.6" fill="none" stroke="url(#ig)" stroke-width="2.8" stroke-linecap="round" stroke-linejoin="miter"/>
<path d="M275.6,71.5 L268.8,87 L275.8,82.6 L282.6,87 Z" fill="none" stroke="#c6c6c6" stroke-width="1.55" stroke-linejoin="miter"/>
<path d="M269.3,70.5 L276.8,84" stroke="#c6c6c6" stroke-width="1.5"/><circle cx="269" cy="69.8" r="2" fill="#e0e0e0"/>
<path d="M87.6,103.8 H102.2 L92.3,114.6 L93.7,108 Z" fill="none" stroke="#d2d2d2" stroke-width="1.3" stroke-linejoin="miter"/>
<g fill="none" stroke="#cdcdcd" stroke-width="1.6"><rect x="-4.9" y="-2.3" width="9.8" height="4.6" rx="2.3" transform="translate(129.4,103.6) rotate(-45)"/><rect x="-4.9" y="-2.3" width="9.8" height="4.6" rx="2.3" transform="translate(120.9,111.9) rotate(-45)"/><path d="M122.6,110.3 L127.6,105.3"/></g>
<rect x="147" y="99.8" width="6" height="6.2" fill="#2e2e2e" stroke="#c4c4c4" stroke-width="2"/>
<rect x="147" y="110" width="6" height="6.2" fill="#2e2e2e" stroke="#c4c4c4" stroke-width="2"/>
<rect x="157" y="99.8" width="6" height="6.2" fill="#2e2e2e" stroke="#c4c4c4" stroke-width="2"/>
<rect x="157" y="110" width="6" height="6.2" fill="#2e2e2e" stroke="#c4c4c4" stroke-width="2"/>
<path d="M178.2,109.9 L185.1,102 L191.7,109.3" fill="none" stroke="#d6d6d6" stroke-width="1.3"/>
<circle cx="185.1" cy="101.9" r="2" fill="#dcdcdc"/><circle cx="178.2" cy="109.9" r="2.2" fill="#dcdcdc"/><circle cx="191.8" cy="109.4" r="2.2" fill="#dcdcdc"/>
<rect x="178" y="114.2" width="14" height="1.8" fill="#d0d0d0"/>
<rect x="208" y="100" width="2" height="16" fill="url(#ig)"/>
<rect x="212" y="100" width="2" height="16" fill="url(#ig)"/>
<rect x="216" y="100" width="2" height="16" fill="url(#ig)"/>
<rect x="220" y="100" width="2" height="16" fill="url(#ig)"/>
<path d="M238,113.6 V105.8 A7.1,7.1 0 0 1 252.2,105.8 V113.6 H248.4 V105.8 A3.3,3.3 0 0 0 241.8,105.8 V113.6 Z" fill="url(#ig)"/>
<rect x="239" y="115.1" width="12" height="1.9" fill="#d0d0d0"/>
<svg x="261" y="94" width="28" height="28" viewBox="261 94 28 28" style="position:static;overflow:hidden"><text x="275" y="107.3" font-size="11.5" fill="#e0e0e0" text-anchor="middle" textLength="20.5" lengthAdjust="spacingAndGlyphs">Ope</text><text x="274.3" y="117" font-size="11.5" fill="#e0e0e0" text-anchor="middle" textLength="22.6" lengthAdjust="spacingAndGlyphs">proje</text></svg>
</svg>
<svg class="trk" width="262" height="85" style="left:80px;top:145px" viewBox="0 0 262 85">
<rect x="0" y="0" width="262" height="85" fill="#333333"/>
<rect x="0" y="0" width="262" height="1" fill="#434343"/>
<path d="M42,46 C43,56 47,59.2 52,59.2 A10.4,10.4 0 1 1 50,80.5 L42,80.5 Z" fill="#000"/>
<rect x="6.5" y="8.5" width="36" height="72" rx="1.5" fill="#1c1c1c" stroke="#050505" stroke-width="1.2"/>
<rect x="8.5" y="28.5" width="14" height="31" rx="1" fill="#0c0c0c"/>
<rect x="9.5" y="29.5" width="12.5" height="28" rx="1" fill="url(#fad)"/>
<rect x="10" y="30" width="11.5" height="1" fill="#6a6a6a"/>
<path d="M13,47 l5,0 l-2.5,3z" fill="#2a2a2a"/><path d="M13.5,36 l4,0 l-2,3z" fill="#2e2e2e"/>
<path d="M15.5,63 v2.5 q0,1.5 -2,1.5" stroke="#444" stroke-width="1" fill="none"/>
<text x="24.5" y="21.3" font-size="13" fill="#b9c2cd" text-anchor="middle" textLength="21" lengthAdjust="spacingAndGlyphs">0.00</text>
<text x="33.3" y="35" font-size="11" font-weight="bold" fill="#e2e2e2" text-anchor="middle" textLength="15.5" lengthAdjust="spacingAndGlyphs">-inf</text>
<text x="33.5" y="51.7" font-size="10" fill="#484848" text-anchor="middle" textLength="15" lengthAdjust="spacingAndGlyphs">-24-</text>
<text x="33.5" y="65.2" font-size="10" fill="#484848" text-anchor="middle" textLength="15" lengthAdjust="spacingAndGlyphs">-42-</text>
<svg x="24" y="75" width="18.5" height="5" style="position:static;overflow:hidden"><text x="9.5" y="7" font-size="10" fill="#484848" text-anchor="middle" textLength="15" lengthAdjust="spacingAndGlyphs">-60-</text></svg>
<circle cx="51.8" cy="69.6" r="8.3" fill="#301d1d"/>
<text x="51.8" y="73.8" font-size="14" fill="#4c3838" text-anchor="middle">a</text>
<rect x="49.6" y="7.6" width="15.8" height="16" fill="#3b3b3b" stroke="#292929" stroke-width="0.8"/>
<rect x="50" y="8" width="15" height="1" fill="#5e4646"/>
<rect x="50" y="21.3" width="15" height="2" fill="#2c2c2c"/>
<text x="57.6" y="19.6" font-size="11" fill="#d0d0d0" text-anchor="middle">M</text>
<rect x="49.6" y="28.6" width="15.8" height="16" fill="#3b3b3b" stroke="#292929" stroke-width="0.8"/>
<rect x="50" y="29" width="15" height="1" fill="#5e4646"/>
<rect x="50" y="42.3" width="15" height="2" fill="#2c2c2c"/>
<text x="57.6" y="40.6" font-size="11" fill="#d0d0d0" text-anchor="middle">S</text>
<rect x="72.5" y="7.5" width="22" height="29.5" fill="#1e1e1e"/>
<rect x="73.5" y="8.5" width="20" height="27.5" fill="url(#fxg)"/>
<rect x="73.5" y="14" width="20" height="3.5" fill="#8fb79a"/>
<rect x="73.5" y="20" width="20" height="1" fill="#a6dcb3"/>
<path d="M81.6,12.2 a3.1,3.1 0 1 0 3.8,0 M83.5,10.6 v3.6" stroke="#0f8a22" stroke-width="1.2" fill="none" stroke-linecap="round"/>
<g font-size="9.6" fill="#0b6216" stroke="#0b6216" stroke-width="0.35"><text x="76.9" y="31.6" textLength="4.9" lengthAdjust="spacingAndGlyphs">F</text><text x="84.9" y="31.6" textLength="5.9" lengthAdjust="spacingAndGlyphs">X</text></g>
<circle cx="114.2" cy="18.7" r="10.8" fill="none" stroke="#2b2b2b" stroke-width="1"/>
<circle cx="114.2" cy="18.7" r="9.3" fill="#494949"/>
<rect x="110.5" y="31" width="7.5" height="1" fill="#454545"/>
<rect x="113.8" y="8.3" width="1" height="1.5" fill="#3d7a45"/>
<text x="114.8" y="43.2" font-size="11.5" fill="#c9c9c9" text-anchor="middle" textLength="30" lengthAdjust="spacingAndGlyphs">center</text>
<rect x="201" y="7" width="16" height="73" rx="1.5" fill="#2b2b2b"/>
<text transform="translate(205.3,11) rotate(90)" font-size="11" fill="#b8b8b8" textLength="53.2" lengthAdjust="spacingAndGlyphs">MIDI: All: A</text>
<rect x="201" y="62.2" width="16" height="7" fill="#2b2b2b"/>
<path d="M206.3,71.5 h6 l-3,4.8z" fill="#5c5c5c"/>
<rect x="226" y="0" width="18" height="76" fill="#6e6e6e"/><rect x="226" y="76" width="18" height="7" fill="#575757"/>
<text x="252" y="48" font-size="13" fill="#cdd0d4" text-anchor="middle" textLength="6" lengthAdjust="spacingAndGlyphs">2</text>
<rect x="261" y="0" width="1" height="76" fill="#1c1c1c"/>
</svg>
<svg class="trk" width="262" height="85" style="left:80px;top:230px" viewBox="0 0 262 85">
<rect x="0" y="0" width="262" height="85" fill="#333333"/>
<rect x="0" y="0" width="262" height="1" fill="#434343"/>
<path d="M42,46 C43,56 47,59.2 52,59.2 A10.4,10.4 0 1 1 50,80.5 L42,80.5 Z" fill="#000"/>
<rect x="6.5" y="8.5" width="36" height="72" rx="1.5" fill="#1c1c1c" stroke="#050505" stroke-width="1.2"/>
<rect x="8.5" y="28.5" width="14" height="31" rx="1" fill="#0c0c0c"/>
<rect x="9.5" y="29.5" width="12.5" height="28" rx="1" fill="url(#fad)"/>
<rect x="10" y="30" width="11.5" height="1" fill="#6a6a6a"/>
<path d="M13,47 l5,0 l-2.5,3z" fill="#2a2a2a"/><path d="M13.5,36 l4,0 l-2,3z" fill="#2e2e2e"/>
<path d="M15.5,63 v2.5 q0,1.5 -2,1.5" stroke="#444" stroke-width="1" fill="none"/>
<text x="24.5" y="21.3" font-size="13" fill="#b9c2cd" text-anchor="middle" textLength="21" lengthAdjust="spacingAndGlyphs">0.00</text>
<text x="33.3" y="35" font-size="11" font-weight="bold" fill="#e2e2e2" text-anchor="middle" textLength="15.5" lengthAdjust="spacingAndGlyphs">-inf</text>
<text x="33.5" y="51.7" font-size="10" fill="#484848" text-anchor="middle" textLength="15" lengthAdjust="spacingAndGlyphs">-24-</text>
<text x="33.5" y="65.2" font-size="10" fill="#484848" text-anchor="middle" textLength="15" lengthAdjust="spacingAndGlyphs">-42-</text>
<svg x="24" y="75" width="18.5" height="5" style="position:static;overflow:hidden"><text x="9.5" y="7" font-size="10" fill="#484848" text-anchor="middle" textLength="15" lengthAdjust="spacingAndGlyphs">-60-</text></svg>
<circle cx="51.8" cy="69.6" r="8.3" fill="#301d1d"/>
<text x="51.8" y="73.8" font-size="14" fill="#4c3838" text-anchor="middle">a</text>
<rect x="49.6" y="7.6" width="15.8" height="16" fill="#3b3b3b" stroke="#292929" stroke-width="0.8"/>
<rect x="50" y="8" width="15" height="1" fill="#5e4646"/>
<rect x="50" y="21.3" width="15" height="2" fill="#2c2c2c"/>
<text x="57.6" y="19.6" font-size="11" fill="#d0d0d0" text-anchor="middle">M</text>
<rect x="49.6" y="28.6" width="15.8" height="16" fill="#3b3b3b" stroke="#292929" stroke-width="0.8"/>
<rect x="50" y="29" width="15" height="1" fill="#5e4646"/>
<rect x="50" y="42.3" width="15" height="2" fill="#2c2c2c"/>
<text x="57.6" y="40.6" font-size="11" fill="#d0d0d0" text-anchor="middle">S</text>
<rect x="72.5" y="7.5" width="22" height="29.5" fill="#1e1e1e"/>
<rect x="73.5" y="8.5" width="20" height="27.5" fill="url(#fxg)"/>
<rect x="73.5" y="14" width="20" height="3.5" fill="#8fb79a"/>
<rect x="73.5" y="20" width="20" height="1" fill="#a6dcb3"/>
<path d="M81.6,12.2 a3.1,3.1 0 1 0 3.8,0 M83.5,10.6 v3.6" stroke="#0f8a22" stroke-width="1.2" fill="none" stroke-linecap="round"/>
<g font-size="9.6" fill="#0b6216" stroke="#0b6216" stroke-width="0.35"><text x="76.9" y="31.6" textLength="4.9" lengthAdjust="spacingAndGlyphs">F</text><text x="84.9" y="31.6" textLength="5.9" lengthAdjust="spacingAndGlyphs">X</text></g>
<circle cx="114.2" cy="18.7" r="10.8" fill="none" stroke="#2b2b2b" stroke-width="1"/>
<circle cx="114.2" cy="18.7" r="9.3" fill="#494949"/>
<rect x="110.5" y="31" width="7.5" height="1" fill="#454545"/>
<rect x="113.8" y="8.3" width="1" height="1.5" fill="#3d7a45"/>
<text x="114.8" y="43.2" font-size="11.5" fill="#c9c9c9" text-anchor="middle" textLength="30" lengthAdjust="spacingAndGlyphs">center</text>
<rect x="201" y="7" width="16" height="73" rx="1.5" fill="#2b2b2b"/>
<text transform="translate(205.3,11) rotate(90)" font-size="11" fill="#b8b8b8" textLength="53.2" lengthAdjust="spacingAndGlyphs">MIDI: All: A</text>
<rect x="201" y="62.2" width="16" height="7" fill="#2b2b2b"/>
<path d="M206.3,71.5 h6 l-3,4.8z" fill="#5c5c5c"/>
<rect x="226" y="0" width="18" height="76" fill="#6e6e6e"/><rect x="226" y="76" width="18" height="7" fill="#575757"/>
<text x="252" y="48" font-size="13" fill="#cdd0d4" text-anchor="middle" textLength="6" lengthAdjust="spacingAndGlyphs">3</text>
<rect x="261" y="0" width="1" height="76" fill="#1c1c1c"/>
</svg>
<svg class="trk" width="262" height="85" style="left:80px;top:315px" viewBox="0 0 262 85">
<rect x="0" y="0" width="262" height="85" fill="#555555"/>
<rect x="0" y="70" width="262" height="12" fill="#4d4d4d"/><rect x="0" y="82" width="262" height="3" fill="#383838"/>
<path d="M42,46 C43,56 47,59.2 52,59.2 A10.4,10.4 0 1 1 50,80.5 L42,80.5 Z" fill="#000"/>
<rect x="6.5" y="8.5" width="36" height="72" rx="1.5" fill="#1c1c1c" stroke="#050505" stroke-width="1.2"/>
<rect x="25.4" y="58.5" width="6.2" height="14" fill="#2b1919"/><rect x="34.2" y="58.5" width="7.4" height="14" fill="#2b1919"/><rect x="25.4" y="72.5" width="16.2" height="5" fill="#484848"/>
<rect x="8.5" y="28.5" width="14" height="31" rx="1" fill="#0c0c0c"/>
<rect x="9.5" y="29.5" width="12.5" height="28" rx="1" fill="url(#fad)"/>
<rect x="10" y="30" width="11.5" height="1" fill="#6a6a6a"/>
<path d="M13,47 l5,0 l-2.5,3z" fill="#2a2a2a"/><path d="M13.5,36 l4,0 l-2,3z" fill="#2e2e2e"/>
<path d="M15.5,63 v2.5 q0,1.5 -2,1.5" stroke="#444" stroke-width="1" fill="none"/>
<text x="24.5" y="21.3" font-size="13" fill="#b9c2cd" text-anchor="middle" textLength="21" lengthAdjust="spacingAndGlyphs">0.00</text>
<text x="33.3" y="35" font-size="11" font-weight="bold" fill="#e2e2e2" text-anchor="middle" textLength="15.5" lengthAdjust="spacingAndGlyphs">-inf</text>
<text x="33.5" y="51.7" font-size="10" fill="#484848" text-anchor="middle" textLength="15" lengthAdjust="spacingAndGlyphs">-24-</text>
<text x="33.5" y="65.2" font-size="10" fill="#484848" text-anchor="middle" textLength="15" lengthAdjust="spacingAndGlyphs">-42-</text>
<svg x="24" y="75" width="18.5" height="5" style="position:static;overflow:hidden"><text x="9.5" y="7" font-size="10" fill="#484848" text-anchor="middle" textLength="15" lengthAdjust="spacingAndGlyphs">-60-</text></svg>
<circle cx="51.8" cy="69.6" r="8.4" fill="#c3111f"/><path d="M44,67 a8.2,8.2 0 0 1 15.6,0z" fill="#d43542" opacity="0.5"/>
<text x="51.8" y="73.8" font-size="14" fill="#fff" text-anchor="middle">a</text>
<rect x="49.6" y="7.6" width="15.8" height="16" fill="#3b3b3b" stroke="#292929" stroke-width="0.8"/>
<rect x="50" y="8" width="15" height="1" fill="#5e4646"/>
<rect x="50" y="21.3" width="15" height="2" fill="#2c2c2c"/>
<text x="57.6" y="19.6" font-size="11" fill="#d0d0d0" text-anchor="middle">M</text>
<rect x="49.6" y="28.6" width="15.8" height="16" fill="#3b3b3b" stroke="#292929" stroke-width="0.8"/>
<rect x="50" y="29" width="15" height="1" fill="#5e4646"/>
<rect x="50" y="42.3" width="15" height="2" fill="#2c2c2c"/>
<text x="57.6" y="40.6" font-size="11" fill="#d0d0d0" text-anchor="middle">S</text>
<rect x="72.5" y="7.5" width="22" height="29.5" fill="#1e1e1e"/>
<rect x="73.5" y="8.5" width="20" height="27.5" fill="url(#fxg)"/>
<rect x="73.5" y="14" width="20" height="3.5" fill="#8fb79a"/>
<rect x="73.5" y="20" width="20" height="1" fill="#a6dcb3"/>
<path d="M81.6,12.2 a3.1,3.1 0 1 0 3.8,0 M83.5,10.6 v3.6" stroke="#0f8a22" stroke-width="1.2" fill="none" stroke-linecap="round"/>
<g font-size="9.6" fill="#0b6216" stroke="#0b6216" stroke-width="0.35"><text x="76.9" y="31.6" textLength="4.9" lengthAdjust="spacingAndGlyphs">F</text><text x="84.9" y="31.6" textLength="5.9" lengthAdjust="spacingAndGlyphs">X</text></g>
<circle cx="114.2" cy="18.7" r="10.7" fill="#4b4b4b" stroke="#2b2b2b" stroke-width="2"/>
<rect x="113.8" y="8.3" width="1" height="1.5" fill="#3d7a45"/>
<text x="114.8" y="43.2" font-size="11.5" fill="#c9c9c9" text-anchor="middle" textLength="30" lengthAdjust="spacingAndGlyphs">center</text>
<rect x="201" y="7" width="16" height="73" rx="1.5" fill="#2b2b2b"/>
<text transform="translate(205.3,11) rotate(90)" font-size="11" fill="#b8b8b8" textLength="53.2" lengthAdjust="spacingAndGlyphs">MIDI: All: A</text>
<rect x="201" y="62.2" width="16" height="7" fill="#2b2b2b"/>
<path d="M206.3,71.5 h6 l-3,4.8z" fill="#5c5c5c"/>
<rect x="226" y="0" width="18" height="76" fill="#6e6e6e"/><rect x="226" y="76" width="18" height="6" fill="#5a5a5a"/>
<text x="252" y="48" font-size="13" fill="#e0504f" text-anchor="middle" textLength="6" lengthAdjust="spacingAndGlyphs">4</text>
<rect x="261" y="0" width="1" height="76" fill="#1c1c1c"/>
</svg>
<svg class="trk" width="262" height="85" style="left:80px;top:400px" viewBox="0 0 262 85">
<rect x="0" y="0" width="262" height="85" fill="#333333"/>
<rect x="0" y="0" width="262" height="1" fill="#434343"/>
<path d="M42,46 C43,56 47,59.2 52,59.2 A10.4,10.4 0 1 1 50,80.5 L42,80.5 Z" fill="#000"/>
<rect x="6.5" y="8.5" width="36" height="72" rx="1.5" fill="#1c1c1c" stroke="#050505" stroke-width="1.2"/>
<rect x="8.5" y="28.5" width="14" height="31" rx="1" fill="#0c0c0c"/>
<rect x="9.5" y="29.5" width="12.5" height="28" rx="1" fill="url(#fad)"/>
<rect x="10" y="30" width="11.5" height="1" fill="#6a6a6a"/>
<path d="M13,47 l5,0 l-2.5,3z" fill="#2a2a2a"/><path d="M13.5,36 l4,0 l-2,3z" fill="#2e2e2e"/>
<path d="M15.5,63 v2.5 q0,1.5 -2,1.5" stroke="#444" stroke-width="1" fill="none"/>
<text x="24.5" y="21.3" font-size="13" fill="#b9c2cd" text-anchor="middle" textLength="21" lengthAdjust="spacingAndGlyphs">0.00</text>
<text x="33.3" y="35" font-size="11" font-weight="bold" fill="#e2e2e2" text-anchor="middle" textLength="15.5" lengthAdjust="spacingAndGlyphs">-inf</text>
<text x="33.5" y="51.7" font-size="10" fill="#484848" text-anchor="middle" textLength="15" lengthAdjust="spacingAndGlyphs">-24-</text>
<text x="33.5" y="65.2" font-size="10" fill="#484848" text-anchor="middle" textLength="15" lengthAdjust="spacingAndGlyphs">-42-</text>
<svg x="24" y="75" width="18.5" height="5" style="position:static;overflow:hidden"><text x="9.5" y="7" font-size="10" fill="#484848" text-anchor="middle" textLength="15" lengthAdjust="spacingAndGlyphs">-60-</text></svg>
<circle cx="51.8" cy="69.6" r="8.3" fill="#301d1d"/>
<text x="51.8" y="73.8" font-size="14" fill="#4c3838" text-anchor="middle">a</text>
<rect x="49.6" y="7.6" width="15.8" height="16" fill="#3b3b3b" stroke="#292929" stroke-width="0.8"/>
<rect x="50" y="8" width="15" height="1" fill="#5e4646"/>
<rect x="50" y="21.3" width="15" height="2" fill="#2c2c2c"/>
<text x="57.6" y="19.6" font-size="11" fill="#d0d0d0" text-anchor="middle">M</text>
<rect x="49.6" y="28.6" width="15.8" height="16" fill="#3b3b3b" stroke="#292929" stroke-width="0.8"/>
<rect x="50" y="29" width="15" height="1" fill="#5e4646"/>
<rect x="50" y="42.3" width="15" height="2" fill="#2c2c2c"/>
<text x="57.6" y="40.6" font-size="11" fill="#d0d0d0" text-anchor="middle">S</text>
<rect x="72.5" y="7.5" width="22" height="29.5" fill="#1e1e1e"/>
<rect x="73.5" y="8.5" width="20" height="27.5" fill="url(#fxg)"/>
<rect x="73.5" y="14" width="20" height="3.5" fill="#8fb79a"/>
<rect x="73.5" y="20" width="20" height="1" fill="#a6dcb3"/>
<path d="M81.6,12.2 a3.1,3.1 0 1 0 3.8,0 M83.5,10.6 v3.6" stroke="#0f8a22" stroke-width="1.2" fill="none" stroke-linecap="round"/>
<g font-size="9.6" fill="#0b6216" stroke="#0b6216" stroke-width="0.35"><text x="76.9" y="31.6" textLength="4.9" lengthAdjust="spacingAndGlyphs">F</text><text x="84.9" y="31.6" textLength="5.9" lengthAdjust="spacingAndGlyphs">X</text></g>
<circle cx="114.2" cy="18.7" r="10.8" fill="none" stroke="#2b2b2b" stroke-width="1"/>
<circle cx="114.2" cy="18.7" r="9.3" fill="#494949"/>
<rect x="110.5" y="31" width="7.5" height="1" fill="#454545"/>
<rect x="113.8" y="8.3" width="1" height="1.5" fill="#3d7a45"/>
<text x="114.8" y="43.2" font-size="11.5" fill="#c9c9c9" text-anchor="middle" textLength="30" lengthAdjust="spacingAndGlyphs">center</text>
<rect x="201" y="7" width="16" height="73" rx="1.5" fill="#2b2b2b"/>
<text transform="translate(205.3,11) rotate(90)" font-size="11" fill="#b8b8b8" textLength="53.2" lengthAdjust="spacingAndGlyphs">MIDI: All: A</text>
<rect x="201" y="62.2" width="16" height="7" fill="#2b2b2b"/>
<path d="M206.3,71.5 h6 l-3,4.8z" fill="#5c5c5c"/>
<rect x="226" y="0" width="18" height="76" fill="#6e6e6e"/><rect x="226" y="76" width="18" height="7" fill="#575757"/>
<text x="252" y="48" font-size="13" fill="#cdd0d4" text-anchor="middle" textLength="6" lengthAdjust="spacingAndGlyphs">5</text>
<rect x="261" y="0" width="1" height="76" fill="#1c1c1c"/>
</svg>
<svg class="trk" width="262" height="85" style="left:80px;top:485px" viewBox="0 0 262 85">
<rect x="0" y="0" width="262" height="85" fill="#333333"/>
<rect x="0" y="0" width="262" height="1" fill="#434343"/>
<path d="M42,46 C43,56 47,59.2 52,59.2 A10.4,10.4 0 1 1 50,80.5 L42,80.5 Z" fill="#000"/>
<rect x="6.5" y="8.5" width="36" height="72" rx="1.5" fill="#1c1c1c" stroke="#050505" stroke-width="1.2"/>
<rect x="8.5" y="28.5" width="14" height="31" rx="1" fill="#0c0c0c"/>
<rect x="9.5" y="29.5" width="12.5" height="28" rx="1" fill="url(#fad)"/>
<rect x="10" y="30" width="11.5" height="1" fill="#6a6a6a"/>
<path d="M13,47 l5,0 l-2.5,3z" fill="#2a2a2a"/><path d="M13.5,36 l4,0 l-2,3z" fill="#2e2e2e"/>
<path d="M15.5,63 v2.5 q0,1.5 -2,1.5" stroke="#444" stroke-width="1" fill="none"/>
<text x="24.5" y="21.3" font-size="13" fill="#b9c2cd" text-anchor="middle" textLength="21" lengthAdjust="spacingAndGlyphs">0.00</text>
<text x="33.3" y="35" font-size="11" font-weight="bold" fill="#e2e2e2" text-anchor="middle" textLength="15.5" lengthAdjust="spacingAndGlyphs">-inf</text>
<text x="33.5" y="51.7" font-size="10" fill="#484848" text-anchor="middle" textLength="15" lengthAdjust="spacingAndGlyphs">-24-</text>
<text x="33.5" y="65.2" font-size="10" fill="#484848" text-anchor="middle" textLength="15" lengthAdjust="spacingAndGlyphs">-42-</text>
<svg x="24" y="75" width="18.5" height="5" style="position:static;overflow:hidden"><text x="9.5" y="7" font-size="10" fill="#484848" text-anchor="middle" textLength="15" lengthAdjust="spacingAndGlyphs">-60-</text></svg>
<circle cx="51.8" cy="69.6" r="8.3" fill="#301d1d"/>
<text x="51.8" y="73.8" font-size="14" fill="#4c3838" text-anchor="middle">a</text>
<rect x="49.6" y="7.6" width="15.8" height="16" fill="#3b3b3b" stroke="#292929" stroke-width="0.8"/>
<rect x="50" y="8" width="15" height="1" fill="#5e4646"/>
<rect x="50" y="21.3" width="15" height="2" fill="#2c2c2c"/>
<text x="57.6" y="19.6" font-size="11" fill="#d0d0d0" text-anchor="middle">M</text>
<rect x="49.6" y="28.6" width="15.8" height="16" fill="#3b3b3b" stroke="#292929" stroke-width="0.8"/>
<rect x="50" y="29" width="15" height="1" fill="#5e4646"/>
<rect x="50" y="42.3" width="15" height="2" fill="#2c2c2c"/>
<text x="57.6" y="40.6" font-size="11" fill="#d0d0d0" text-anchor="middle">S</text>
<rect x="72.5" y="7.5" width="22" height="29.5" fill="#1e1e1e"/>
<rect x="73.5" y="8.5" width="20" height="27.5" fill="url(#fxg)"/>
<rect x="73.5" y="14" width="20" height="3.5" fill="#8fb79a"/>
<rect x="73.5" y="20" width="20" height="1" fill="#a6dcb3"/>
<path d="M81.6,12.2 a3.1,3.1 0 1 0 3.8,0 M83.5,10.6 v3.6" stroke="#0f8a22" stroke-width="1.2" fill="none" stroke-linecap="round"/>
<g font-size="9.6" fill="#0b6216" stroke="#0b6216" stroke-width="0.35"><text x="76.9" y="31.6" textLength="4.9" lengthAdjust="spacingAndGlyphs">F</text><text x="84.9" y="31.6" textLength="5.9" lengthAdjust="spacingAndGlyphs">X</text></g>
<circle cx="114.2" cy="18.7" r="10.8" fill="none" stroke="#2b2b2b" stroke-width="1"/>
<circle cx="114.2" cy="18.7" r="9.3" fill="#494949"/>
<rect x="110.5" y="31" width="7.5" height="1" fill="#454545"/>
<rect x="113.8" y="8.3" width="1" height="1.5" fill="#3d7a45"/>
<text x="114.8" y="43.2" font-size="11.5" fill="#c9c9c9" text-anchor="middle" textLength="30" lengthAdjust="spacingAndGlyphs">center</text>
<rect x="201" y="7" width="16" height="73" rx="1.5" fill="#2b2b2b"/>
<text transform="translate(205.3,11) rotate(90)" font-size="11" fill="#b8b8b8" textLength="53.2" lengthAdjust="spacingAndGlyphs">MIDI: All: A</text>
<rect x="201" y="62.2" width="16" height="7" fill="#2b2b2b"/>
<path d="M206.3,71.5 h6 l-3,4.8z" fill="#5c5c5c"/>
<rect x="226" y="0" width="18" height="77" fill="#279a6c"/><rect x="226" y="77" width="18" height="6" fill="#1f8058"/>
<text transform="translate(229.5,21) rotate(90)" font-size="14.5" fill="#dff5ea" textLength="46" lengthAdjust="spacingAndGlyphs">Kontakt</text>
<text x="252" y="48" font-size="13" fill="#cdd0d4" text-anchor="middle" textLength="6" lengthAdjust="spacingAndGlyphs">6</text>
<rect x="261" y="0" width="1" height="76" fill="#1c1c1c"/>
</svg>
<div class="a" style="left:84px;top:895px;width:258px;height:1px;background:#7a7a7a"></div>
<div class="a" style="left:80px;top:570px;width:1px;height:326px;background:#363636"></div>
<div class="a" style="left:84px;top:897px;font-size:12px;color:#cfcfcf;white-space:nowrap;transform:scaleX(0.86);transform-origin:0 0">Marquee select items</div>
<style>
#dlg{left:647px;top:340px;width:758px;height:505px;background:#b4b4b4;box-sizing:border-box;border-top:1px solid #fff;border-left:1px solid #fff;border-right:1px solid #6a6a6a;border-bottom:1px solid #6a6a6a;}
#dlgin{left:657px;top:372px;width:738px;height:463px;background:#4a4a4a;}
.dt{position:absolute;white-space:nowrap;font-size:14.5px;line-height:18px;transform-origin:0 0;transform:scaleX(0.905);}
.btn{position:absolute;box-sizing:border-box;background:#f0f0f0;border:1px solid;border-color:#fff #696969 #696969 #fff;box-shadow:inset -1px -1px 0 #a0a0a0;color:#000;font-size:14.5px;display:flex;align-items:center;justify-content:center;padding-bottom:1px;}
.btn span{display:inline-block;transform:scaleX(0.93);white-space:nowrap;}
.btn.dis{color:#a0a0a0;}
.btn i{font-style:normal;letter-spacing:-1.3px;margin-left:-0.5px}
.sunk{position:absolute;box-sizing:border-box;border:1px solid;border-color:#a0a0a0 #fff #fff #a0a0a0;box-shadow:inset 1px 1px 0 #696969,inset -1px -1px 0 #e3e3e3;}
.row{position:absolute;left:0;width:686px;height:20px;}
.row .dt{top:1px;color:#ababab;}
</style>
<div id="dlg" class="a"></div>
<div class="a" style="left:657px;top:349px;width:157px;height:23px;background:#9bb5d6"></div>
<div class="a" style="left:814px;top:349px;width:140px;height:23px;background:#a3bcda"></div>
<div class="a" style="left:954px;top:349px;width:132px;height:23px;background:#a9c4dc"></div>
<div class="a" style="left:1086px;top:349px;width:309px;height:23px;background:#b4cae6"></div>
<div class="a dt" style="left:659px;top:355px;font-size:15.5px;color:#000;transform:scaleX(0.95)">Actions</div>
<div class="a" style="left:1373px;top:352px;width:19px;height:17px;background:#f0f0f0;border:1px solid;border-color:#fff #444 #444 #fff;box-sizing:border-box;box-shadow:inset -1px -1px 0 #a0a0a0"><svg width="11" height="10" style="left:3px;top:3px" viewBox="0 0 11 10"><path d="M1.5,1 L9.5,9 M9.5,1 L1.5,9" stroke="#000" stroke-width="1.8"/></svg></div>
<div id="dlgin" class="a"></div>
<div class="a" style="left:1395px;top:349px;width:1px;height:487px;background:#fff"></div><div class="a" style="left:657px;top:835px;width:739px;height:1px;background:#fff"></div>
<div class="a dt" style="left:671px;top:390px;color:#dcdcdc">Filter:</div>
<div class="sunk" style="left:709px;top:385px;width:244px;height:28px;background:#4a4a4a"></div>
<div class="a dt" style="left:712px;top:388px;color:#d2d2d2">lua</div>
<div class="btn" style="left:957px;top:385px;width:64px;height:27px"><span>Clear</span></div>
<div class="btn" style="left:1025px;top:385px;width:110px;height:27px"><span>Find shortcut<i>...</i></span></div>
<div class="a dt" style="left:1145px;top:390px;color:#dcdcdc">Section:</div>
<div class="sunk" style="left:1201px;top:385px;width:182px;height:24px;background:#4a4a4a"></div>
<div class="a dt" style="left:1205px;top:388px;color:#d2d2d2">Main</div>
<div class="btn" style="left:1359px;top:387px;width:22px;height:20px"><svg width="10" height="5" style="position:static" viewBox="0 0 10 5"><path d="M0,0 h10 l-5,5z" fill="#000"/></svg></div>
<div class="sunk" style="left:671px;top:419px;width:712px;height:274px;background:#f0f0f0"></div>
<div class="a" id="lst" style="left:673px;top:421px;width:686px;height:248px;background:#505050;overflow:hidden">
<div class="a" style="left:0;top:0;width:686px;height:22px;background:#f0f0f0;border-bottom:1px solid #a0a0a0;box-sizing:border-box"></div>
<div class="a" style="left:288px;top:0;width:1px;height:21px;background:#696969"></div><div class="a" style="left:289px;top:0;width:1px;height:21px;background:#fff"></div>
<div class="a dt" style="left:6px;top:2px;color:#000">Shortcut</div>
<div class="a dt" style="left:295px;top:2px;color:#000">Description</div>
<div class="row" style="top:22px;"><div class="dt" style="left:6px;">Ctrl+=</div><div class="dt" style="left:295px;">Script: Horiz_Zoom_In_new.lua</div></div>
<div class="row" style="top:42px;"><div class="dt" style="left:6px;">Ctrl+-</div><div class="dt" style="left:295px;">Script: Horiz_Zoom_Out.lua</div></div>
<div class="row" style="top:62px;"><div class="dt" style="left:6px;"></div><div class="dt" style="left:295px;">Script: Horiz_Zoom_In.lua</div></div>
<div class="row" style="top:82px;"><div class="dt" style="left:6px;"></div><div class="dt" style="left:295px;">Script: Move arrange towards center (step = 0,5 arrange).lua</div></div>
<div class="row" style="top:102px;"><div class="dt" style="left:6px;"></div><div class="dt" style="left:295px;">Script: char get.lua</div></div>
<div class="row" style="top:122px;"><div class="dt" style="left:6px;"></div><div class="dt" style="left:295px;">Script: not_warping - char.lua</div></div>
<div class="row" style="top:142px;"><div class="dt" style="left:6px;"></div><div class="dt" style="left:295px;">Script: simple test char.lua</div></div>
<div class="row" style="top:162px;"><div class="dt" style="left:6px;"></div><div class="dt" style="left:295px;">Script: !GT_SimpleBtn-Sldr2.lua</div></div>
<div class="row" style="top:182px;"><div class="dt" style="left:6px;"></div><div class="dt" style="left:295px;transform:scaleX(0.886);">Script: set notes with velocity = 127 to 125.lua</div></div>
<div class="row" style="top:202px;"><div class="dt" style="left:6px;"></div><div class="dt" style="left:295px;">Script: set selected notes velosity to 125.lua</div></div>
<div class="row" style="top:222px;background:#6e6e6e;left:2px;width:684px;"><div class="dt" style="left:4px;color:#fff;">Num 3</div><div class="dt" style="left:293px;color:#fff;">Script: Get selected track state chunk.lua</div></div>
<div class="row" style="top:242px;"><div class="dt" style="left:6px;"></div><div class="dt" style="left:295px;">Script: mpl_Wooting Track 0.51.lua</div></div>
</div>
<div class="btn" style="left:1359px;top:421px;width:22px;height:22px"><span><svg width="11" height="6" style="position:static;display:block" viewBox="0 0 11 6"><path d="M0,6 h11 l-5.5,-6z" fill="#000"/></svg></span></div>
<div class="btn" style="left:1359px;top:617px;width:22px;height:11px"><span></span></div>
<div class="btn" style="left:1359px;top:647px;width:22px;height:22px"><span><svg width="11" height="6" style="position:static;display:block" viewBox="0 0 11 6"><path d="M0,0 h11 l-5.5,6z" fill="#000"/></svg></span></div>
<div class="btn" style="left:673px;top:669px;width:22px;height:22px"><span><svg width="6" height="11" style="position:static;display:block" viewBox="0 0 6 11"><path d="M6,0 v11 l-6,-5.5z" fill="#000"/></svg></span></div>
<div class="btn" style="left:695px;top:669px;width:371px;height:22px"><span></span></div>
<div class="btn" style="left:1337px;top:669px;width:22px;height:22px"><span><svg width="6" height="11" style="position:static;display:block" viewBox="0 0 6 11"><path d="M0,0 v11 l6,-5.5z" fill="#000"/></svg></span></div>
<div class="a" style="left:671px;top:706px;width:232px;height:80px;box-sizing:border-box;border:1px solid #fff;"></div><div class="a" style="left:672px;top:707px;width:230px;height:78px;box-sizing:border-box;border:1px solid #a0a0a0;border-right-color:transparent;border-bottom-color:transparent"></div>
<div class="a" style="left:678px;top:700px;width:171px;height:14px;background:#4a4a4a"></div>
<div class="a dt" style="left:681px;top:697px;color:#dcdcdc">Shortcuts for selected action</div>
<div class="sunk" style="left:678px;top:719px;width:141px;height:60px;background:#505050"></div>
<div class="a dt" style="left:683px;top:720px;color:#9c9c9c">Num 3</div>
<div class="btn" style="left:825px;top:717px;width:72px;height:27px"><span>Add<i>...</i></span></div>
<div class="btn dis" style="left:825px;top:751px;width:72px;height:27px"><span>Delete</span></div>
<div class="a dt" style="left:833px;top:722px;width:200px;text-align:right;color:#dcdcdc;transform-origin:100% 0">Custom actions:</div>
<div class="a dt" style="left:833px;top:756px;width:200px;text-align:right;color:#dcdcdc;transform-origin:100% 0">ReaScript:</div>
<div class="btn" style="left:1041px;top:715px;width:82px;height:27px"><span>New<i>...</i></span></div>
<div class="btn dis" style="left:1127px;top:715px;width:82px;height:27px"><span>Edit<i>...</i></span></div>
<div class="btn dis" style="left:1213px;top:715px;width:82px;height:27px"><span>Delete</span></div>
<div class="btn dis" style="left:1299px;top:715px;width:82px;height:27px"><span>Copy</span></div>
<div class="btn" style="left:1041px;top:751px;width:82px;height:27px"><span>New<i>...</i></span></div>
<div class="btn" style="left:1127px;top:751px;width:82px;height:27px"><span>Load<i>...</i></span></div>
<div class="btn" style="left:1213px;top:751px;width:82px;height:27px"><span>Edit<i>...</i></span></div>
<div class="btn" style="left:1299px;top:751px;width:82px;height:27px"><span>Delete</span></div>
<div class="btn" style="left:671px;top:799px;width:110px;height:27px"><span>Import/export<i>...</i></span></div>
<div class="btn" style="left:789px;top:799px;width:110px;height:27px"><span>Menu editor<i>...</i></span></div>
<div class="btn" style="left:1041px;top:799px;width:110px;height:27px"><span>Run</span></div>
<div class="btn" style="left:1157px;top:799px;width:110px;height:27px"><span>Run/close</span></div>
<div class="btn" style="left:1273px;top:799px;width:110px;height:27px"><span>Close</span></div>
<svg width="13" height="20" style="left:919px;top:654px" viewBox="0 0 13 20"><path d="M0.6,0.8 V16.3 L4.1,13 L6.8,18.9 L9.1,17.9 L6.4,12.2 H11.4 Z" fill="#fff" stroke="#000" stroke-width="1.1" stroke-linejoin="miter"/></svg>
<div class="a" style="left:350px;top:890px;width:1217px;height:22px;background:#2d2d2d"></div>
<div class="a" style="left:372px;top:891px;width:1196px;height:19px;background:#4a4a4a;border:1px solid #0a0a0a;border-right:none;box-sizing:border-box"></div>
<svg width="18" height="18" style="left:352px;top:892px" viewBox="0 0 18 18"><circle cx="8.7" cy="8.7" r="7.6" fill="#4a4a4a" stroke="#181818" stroke-width="1.4"/><path d="M11,5.4 v6.6 l-5.6,-3.3z" fill="#6a6a6a"/></svg>
<div class="a" style="left:74px;top:918px;width:1493px;height:2px;background:#3a3a3a"></div>
<div class="a" style="left:342px;top:145px;width:1px;height:751px;background:#383838"></div>
<div class="a" style="left:1527px;top:904px;width:40px;height:16px;background:#000"></div>
<div class="a" style="left:1530.5px;top:905px;font-family:'Liberation Mono',monospace;font-weight:bold;font-size:11px;line-height:13px;color:#fff;letter-spacing:1.2px;white-space:nowrap">0:00</div>
</div></body></html>
